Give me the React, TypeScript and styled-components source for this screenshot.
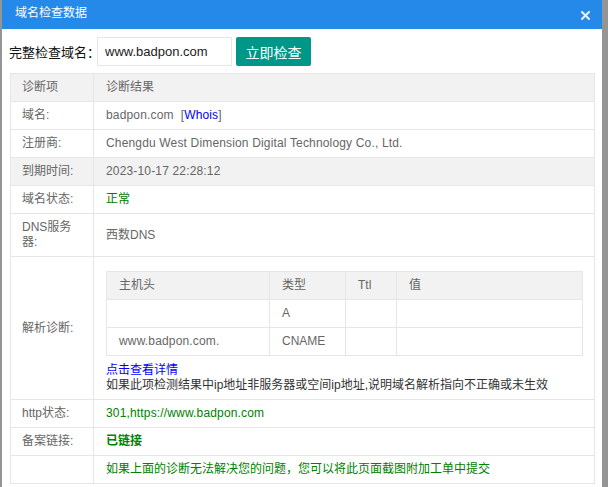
import styled, { createGlobalStyle } from "styled-components";

const GlobalStyle = createGlobalStyle`
  html, body {
    margin: 0;
    padding: 0;
    background: #949494;
  }
  body {
    font-family: "Liberation Sans", Arial, "Noto Sans CJK SC", sans-serif;
  }
`;

const Dialog = styled.div`
  margin-left: 2px;
  width: 600px;
  height: 487px;
  overflow: hidden;
  background: #fff;
`;

const Header = styled.div`
  height: 29px;
  background: #2589ea;
  display: flex;
  align-items: center;
  justify-content: space-between;
  padding: 0 12px 0 13px;
  box-sizing: border-box;
`;

const Title = styled.div`
  color: #fff;
  font-size: 12px;
  line-height: 14px;
  margin-top: -4px;
`;

const Close = styled.button`
  border: 0;
  padding: 0;
  background: none;
  width: 9px;
  height: 9px;
  display: flex;
  margin-top: 1px;
`;

const SearchBar = styled.div`
  display: flex;
  align-items: center;
  margin: 8px 0 0 7px;
`;

const Label = styled.label`
  width: 88px;
  flex-shrink: 0;
  font-size: 13px;
  color: #111;
  white-space: nowrap;
`;

const Input = styled.input`
  width: 135px;
  height: 29px;
  box-sizing: border-box;
  border: 1px solid #e6e6e6;
  padding: 0 7px;
  font-family: inherit;
  font-size: 13px;
  color: #222;
  outline: none;
`;

const Button = styled.button`
  margin-left: 4px;
  width: 75px;
  height: 29px;
  border: 0;
  border-radius: 2px;
  background: #009688;
  color: #fff;
  font-family: inherit;
  font-size: 14px;
`;

const Table = styled.table`
  margin: 7px 0 0 8px;
  width: 585px;
  border-collapse: collapse;
  table-layout: fixed;
  font-size: 12px;
  line-height: 15px;
  color: #666;
`;

const LabelCol = styled.col`
  width: 83px;
`;

const Row = styled.tr<{ $shaded?: boolean }>`
  background: ${(p) => (p.$shaded ? "#f2f2f2" : "#fff")};
`;

const Cell = styled.td`
  border: 1px solid #e6e6e6;
  padding: 6px 11px;
  text-align: left;
  font-weight: normal;
  vertical-align: middle;
`;

const ValueCell = styled(Cell)`
  padding-left: 12px;
`;

// latin text in the reference renders a little wider than Liberation Sans
const Latin = styled.span`
  letter-spacing: 0.16px;
`;

const Green = styled.span<{ $bold?: boolean }>`
  color: #008000;
  font-weight: ${(p) => (p.$bold ? 600 : "normal")};
`;

const Link = styled.a`
  color: #0000ff;
  text-decoration: none;
`;

const InnerTable = styled.table`
  width: 100%;
  margin: 8px 0 7px;
  border-collapse: collapse;
  table-layout: fixed;
`;

const InnerCell = styled.td`
  border: 1px solid #e6e6e6;
  padding: 6px 12px;
  height: 15px;
`;

const Note = styled.div`
  color: #333;
`;

function CloseIcon() {
  return (
    <svg width="9" height="9" viewBox="0 0 9 9">
      <path d="M1 1 L8 8 M8 1 L1 8" stroke="#e8f1fc" strokeWidth="2" strokeLinecap="square" />
    </svg>
  );
}

const records = [
  { host: "", type: "A", ttl: "", value: "" },
  { host: "www.badpon.com.", type: "CNAME", ttl: "", value: "" },
];

function App() {
  return (
    <>
      <GlobalStyle />
      <Dialog>
        <Header>
          <Title>域名检查数据</Title>
          <Close aria-label="关闭">
            <CloseIcon />
          </Close>
        </Header>

        <SearchBar>
          <Label>完整检查域名：</Label>
          <Input defaultValue="www.badpon.com" />
          <Button>立即检查</Button>
        </SearchBar>

        <Table>
          <colgroup>
            <LabelCol />
            <col />
          </colgroup>
          <tbody>
            <Row $shaded>
              <Cell>诊断项</Cell>
              <ValueCell>诊断结果</ValueCell>
            </Row>
            <Row>
              <Cell>域名:</Cell>
              <ValueCell>
                <Latin>
                  badpon.com&nbsp;&nbsp;[<Link href="#">Whois</Link>]
                </Latin>
              </ValueCell>
            </Row>
            <Row>
              <Cell>注册商:</Cell>
              <ValueCell>
                <Latin>Chengdu West Dimension Digital Technology Co., Ltd.</Latin>
              </ValueCell>
            </Row>
            <Row $shaded>
              <Cell>到期时间:</Cell>
              <ValueCell>
                <Latin>2023-10-17 22:28:12</Latin>
              </ValueCell>
            </Row>
            <Row>
              <Cell>域名状态:</Cell>
              <ValueCell>
                <Green>正常</Green>
              </ValueCell>
            </Row>
            <Row>
              <Cell>DNS服务器:</Cell>
              <ValueCell>西数DNS</ValueCell>
            </Row>
            <Row>
              <Cell>解析诊断:</Cell>
              <ValueCell>
                <InnerTable>
                  <colgroup>
                    <col style={{ width: 163 }} />
                    <col style={{ width: 76 }} />
                    <col style={{ width: 51 }} />
                    <col />
                  </colgroup>
                  <tbody>
                    <Row $shaded>
                      <InnerCell>主机头</InnerCell>
                      <InnerCell>类型</InnerCell>
                      <InnerCell>Ttl</InnerCell>
                      <InnerCell>值</InnerCell>
                    </Row>
                    {records.map((r, i) => (
                      <Row key={i}>
                        <InnerCell>
                          <Latin>{r.host}</Latin>
                        </InnerCell>
                        <InnerCell>{r.type}</InnerCell>
                        <InnerCell>{r.ttl}</InnerCell>
                        <InnerCell>{r.value}</InnerCell>
                      </Row>
                    ))}
                  </tbody>
                </InnerTable>
                <Link href="#">点击查看详情</Link>
                <Note>如果此项检测结果中ip地址非服务器或空间ip地址,说明域名解析指向不正确或未生效</Note>
              </ValueCell>
            </Row>
            <Row>
              <Cell>http状态:</Cell>
              <ValueCell>
                <Green>
                  <Latin>301,https://www.badpon.com</Latin>
                </Green>
              </ValueCell>
            </Row>
            <Row>
              <Cell>备案链接:</Cell>
              <ValueCell>
                <Green $bold>已链接</Green>
              </ValueCell>
            </Row>
            <Row>
              <Cell></Cell>
              <ValueCell>
                <Green>如果上面的诊断无法解决您的问题，您可以将此页面截图附加工单中提交</Green>
              </ValueCell>
            </Row>
          </tbody>
        </Table>
      </Dialog>
    </>
  );
}

export default App;
